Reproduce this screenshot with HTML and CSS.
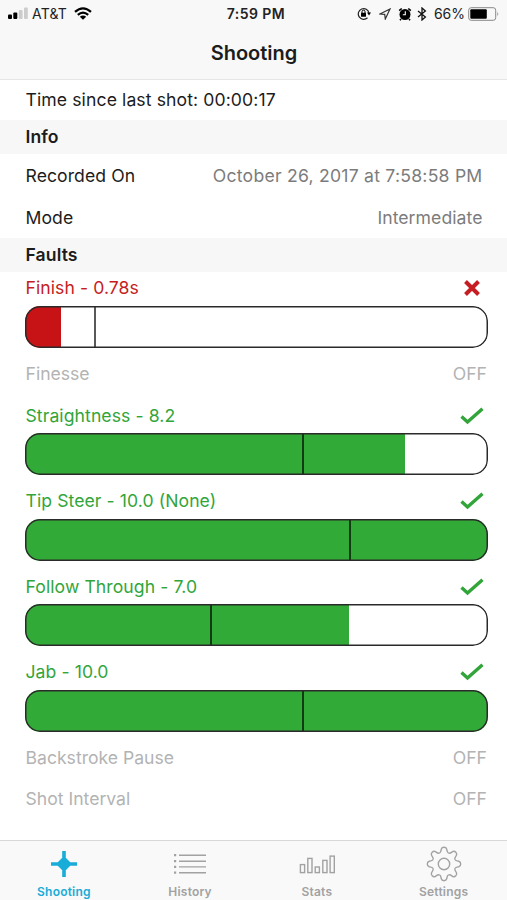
FILE: index.html
```html
<!DOCTYPE html>
<html lang="en">
<head>
<meta charset="utf-8">
<title>Shooting</title>
<link rel="stylesheet" href="styles.css">
</head>
<body>
<svg class="defs" aria-hidden="true">
  <symbol id="check" viewBox="0 0 24 18"><path d="M1.5 9.5 7.5 15 22.5 1.8" fill="none" stroke="currentColor" stroke-width="3.4"/></symbol>
  <symbol id="cross" viewBox="0 0 16 16"><path d="M1.5 1.5 14.5 14.5M14.5 1.5 1.5 14.5" fill="none" stroke="currentColor" stroke-width="4"/></symbol>
  <symbol id="tooth" overflow="visible"><path d="M-4.5-10.9C-3-11.6-3-13.3-2.7-14.8Q-2.2-16.7 0-16.7 2.2-16.7 2.7-14.8C3-13.3 3-11.6 4.5-10.9"/></symbol>
</svg>
<div class="screen">
  <header class="top">
    <div class="status">
      <div class="carrier">
        <svg width="20" height="13" viewBox="0 0 20 13"><rect x="0" y="7.5" width="4" height="4.5" rx="1"/><rect x="5.3" y="5.5" width="4" height="6.5" rx="1"/><rect x="10.8" y="3" width="3.8" height="9" rx="1" fill="#ccc"/><rect x="16" y="0.5" width="3.8" height="11.5" rx="1" fill="#ccc"/></svg>
        <span class="carrier-name">AT&amp;T</span>
        <svg class="wifi" width="18" height="13" viewBox="0 0 18 13"><g fill="none" stroke="#000" stroke-width="2.2"><path d="M1 4.8Q9-2.2 17 4.8"/><path d="M3.8 7.9Q9 3.3 14.2 7.9"/></g><path d="M5.8 9.7Q9 7.2 12.2 9.7L9 12.7Z"/></svg>
      </div>
      <span class="clock">7:59 PM</span>
      <div class="indicators">
        <svg width="14" height="13" viewBox="0 0 14 13"><path d="M10.5 10.8A5.4 5.4 0 1 1 12 6" fill="none" stroke="#222" stroke-width="1.2"/><path d="M10 5.6H14L12 8.5Z"/><rect x="4" y="5.8" width="5" height="4" rx=".5"/><path d="M5 6V4.7a1.5 1.5 0 0 1 3 0V6" fill="none" stroke="#000"/></svg>
        <svg class="arrow" width="12" height="12" viewBox="0 0 12 12"><path d="M.9 6 11 1 6.3 11 5.7 6.3Z" fill="none" stroke="#333" stroke-width="1.2"/></svg>
        <svg class="alarm" width="14" height="14" viewBox="0 0 14 14"><circle cx="7" cy="7.5" r="5.5"/><path d="M1.2 3.6 3.7 1.5M10.3 1.5l2.5 2.1M3 12l-1 1.2M11 12l1 1.2" stroke="#000" stroke-width="1.6"/><path d="M7.3 4.2V7.8H4.8" fill="none" stroke="#fff" stroke-width="1.1"/></svg>
        <svg class="bluetooth" width="10" height="14" viewBox="0 0 10 14"><path d="M1 4 8.4 10 5 13V1L8.4 4 1 10" fill="none" stroke="#111" stroke-width="1.3"/></svg>
        <span class="percent">66%</span>
        <svg class="battery" width="32" height="14" viewBox="0 0 32 14"><rect x=".7" y=".7" width="27" height="12.6" rx="2.5" fill="none" stroke="#888" stroke-width="1"/><rect x="2.3" y="2.3" width="16.5" height="9.4" rx="1"/><path d="M29.4 4.8Q31.2 7 29.4 9.2Z" fill="#888"/></svg>
      </div>
    </div>
    <h1 class="title">Shooting</h1>
  </header>
  <main class="content">
    <div class="row timer"><span>Time since last shot: 00:00:17</span></div>
    <h2 class="section">Info</h2>
    <div class="row info"><span>Recorded On</span><span class="value date">October 26, 2017 at 7:58:58 PM</span></div>
    <div class="row info"><span>Mode</span><span class="value">Intermediate</span></div>
    <h2 class="section">Faults</h2>
    <div class="fault bad">
      <div class="label"><span>Finish - 0.78s</span><svg class="cross" width="16" height="16"><use href="#cross"/></svg></div>
      <div class="bar"><div class="fill" style="width:7.8%"></div><div class="mark" style="left:15%"></div></div>
    </div>
    <div class="off finesse"><span>Finesse</span><span>OFF</span></div>
    <div class="fault good">
      <div class="label"><span>Straightness - 8.2</span><svg width="24" height="18"><use href="#check"/></svg></div>
      <div class="bar"><div class="fill" style="width:82%"></div><div class="mark" style="left:60%"></div></div>
    </div>
    <div class="fault good">
      <div class="label"><span>Tip Steer - 10.0 (None)</span><svg width="24" height="18"><use href="#check"/></svg></div>
      <div class="bar"><div class="fill" style="width:100%"></div><div class="mark" style="left:70%"></div></div>
    </div>
    <div class="fault good">
      <div class="label"><span>Follow Through - 7.0</span><svg width="24" height="18"><use href="#check"/></svg></div>
      <div class="bar"><div class="fill" style="width:70%"></div><div class="mark" style="left:40%"></div></div>
    </div>
    <div class="fault good">
      <div class="label"><span>Jab - 10.0</span><svg width="24" height="18"><use href="#check"/></svg></div>
      <div class="bar"><div class="fill" style="width:100%"></div><div class="mark" style="left:60%"></div></div>
    </div>
    <div class="off"><span>Backstroke Pause</span><span>OFF</span></div>
    <div class="off"><span>Shot Interval</span><span>OFF</span></div>
  </main>
  <nav class="tabs">
    <div class="tab active">
      <svg width="36" height="36" viewBox="-18 -18 36 36"><path d="M-13 0H13M0-13V13" stroke="currentColor" stroke-width="3.6"/><path d="M0-6.8 2.5-5.5 5.5-2.5 6.8 0 5.5 2.5 2.5 5.5 0 6.8-2.5 5.5-5.5 2.5-6.8 0-5.5-2.5-2.5-5.5Z" fill="currentColor"/></svg>
      <span>Shooting</span>
    </div>
    <div class="tab">
      <svg width="36" height="36" viewBox="-18 -18 36 36"><path d="M-11-8.8H16M-11-2.8H16M-11 2.9H16M-11 8.7H16" stroke="currentColor" stroke-width="1.4"/><path d="M-16-8.8h2.2M-16-2.8h2.2M-16 2.9h2.2M-16 8.7h2.2" stroke="currentColor" stroke-width="2.2"/></svg>
      <span>History</span>
    </div>
    <div class="tab">
      <svg width="36" height="36" viewBox="-18 -18 36 36"><g fill="none" stroke="currentColor" stroke-width="1.4"><rect x="-16.6" y="0.6" width="4.2" height="8"/><rect x="-9.2" y="-5.6" width="4.2" height="14.2"/><rect x="-1.8" y="3" width="4.2" height="5.6"/><rect x="5.8" y="-3.6" width="4.2" height="12.2"/><rect x="13.1" y="-7.9" width="4.2" height="16.5"/></g></svg>
      <span>Stats</span>
    </div>
    <div class="tab">
      <svg width="36" height="36" viewBox="-18 -18 36 36"><g fill="none" stroke="currentColor" stroke-width="1.4"><circle r="5.7"/><use href="#tooth"/><use href="#tooth" transform="rotate(45)"/><use href="#tooth" transform="rotate(90)"/><use href="#tooth" transform="rotate(135)"/><use href="#tooth" transform="rotate(180)"/><use href="#tooth" transform="rotate(225)"/><use href="#tooth" transform="rotate(270)"/><use href="#tooth" transform="rotate(315)"/></g></svg>
      <span>Settings</span>
    </div>
  </nav>
</div>
</body>
</html>
```
FILE: styles.css
```css
* { box-sizing: border-box; }
body {
  margin: 0;
  background: #fff;
  color: #1c1c1c;
  font: 400 17.6px/24px Inter, "Liberation Sans", sans-serif;
}
svg { display: block; flex: none; }
.defs { position: absolute; width: 0; height: 0; }
.screen {
  width: 507px;
  height: 900px;
  display: flex;
  flex-direction: column;
  overflow: hidden;
  white-space: nowrap;
}
.top {
  height: 79.5px;
  flex: none;
  background: #f8f8f8;
  border-bottom: 1.5px solid #e6e6e6;
}
.status {
  height: 27px;
  padding: 0 7px 0 8px;
  display: grid;
  grid-template-columns: 1fr auto 1fr;
  align-items: center;
  font-size: 14px;
  color: #222;
}
.carrier, .indicators { display: flex; align-items: center; }
.indicators { justify-content: flex-end; }
.carrier-name { margin-left: 4px; letter-spacing: .2px; }
.wifi { margin-left: 7px; }
.clock { padding-left: 4px; font-weight: 600; font-size: 14px; letter-spacing: .45px; }
.arrow { margin-left: 8px; }
.alarm { margin-left: 7px; }
.bluetooth { margin-left: 5px; }
.percent { margin-left: 7px; }
.battery { margin-left: 3px; }
.title {
  margin: 0;
  padding-left: 1px;
  height: 52px;
  line-height: 52px;
  text-align: center;
  font-size: 20px;
  font-weight: 600;
}
.content { flex: 1; }
.row {
  display: flex;
  align-items: center;
  justify-content: space-between;
  padding: 0 24.5px 0 25.5px;
}
.timer { height: 40.5px; letter-spacing: .1px; }
.info { height: 42px; padding-top: 2px; letter-spacing: .07px; }
.value { color: #7c7c7c; }
.date { letter-spacing: .24px; }
.section {
  margin: 0;
  height: 34px;
  padding: 0 25.5px;
  line-height: 34px;
  font-size: 17.6px;
  font-weight: 600;
  letter-spacing: .1px;
  background: #f7f7f7;
}
.fault { height: 85.5px; padding: 0 19px 0 25px; }
.label {
  height: 34px;
  padding: 0 4px 1px .5px;
  display: flex;
  align-items: center;
  justify-content: space-between;
  letter-spacing: .08px;
}
.cross { margin-right: 4px; }
.bad { color: #c61d22; }
.bad .label { padding-bottom: 2px; }
.good { color: #32a53a; }
.bar {
  position: relative;
  height: 42px;
  border-radius: 15px;
  overflow: hidden;
}
.bar::after {
  content: "";
  position: absolute;
  inset: 0;
  box-shadow: inset 0 0 0 1.5px #2a2a2a;
  border-radius: 15px;
}
.fill { height: 100%; }
.bad .fill { background: #c71315; }
.good .fill { background: #32aa37; }
.mark {
  position: absolute;
  top: 0;
  bottom: 0;
  width: 2px;
  margin-left: -.5px;
  background: rgba(0, 0, 0, .65);
}
.off {
  height: 41.5px;
  padding: 4.5px 20px 0 25.5px;
  display: flex;
  justify-content: space-between;
  color: #b3b3b3;
}
.finesse { padding-top: 4px; }
.tabs {
  height: 60.5px;
  flex: none;
  display: grid;
  grid-template-columns: repeat(4, 1fr);
  background: #f9f9f9;
  border-top: 1px solid #d8d8d8;
}
.tab {
  display: flex;
  flex-direction: column;
  align-items: center;
  padding-top: 5px;
  color: #a2a2a2;
  font-size: 12px;
  font-weight: 600;
  line-height: 16px;
  letter-spacing: .2px;
}
.tab span { margin-top: 2px; }
.active { padding-left: 1px; color: #18acd8; }
```
